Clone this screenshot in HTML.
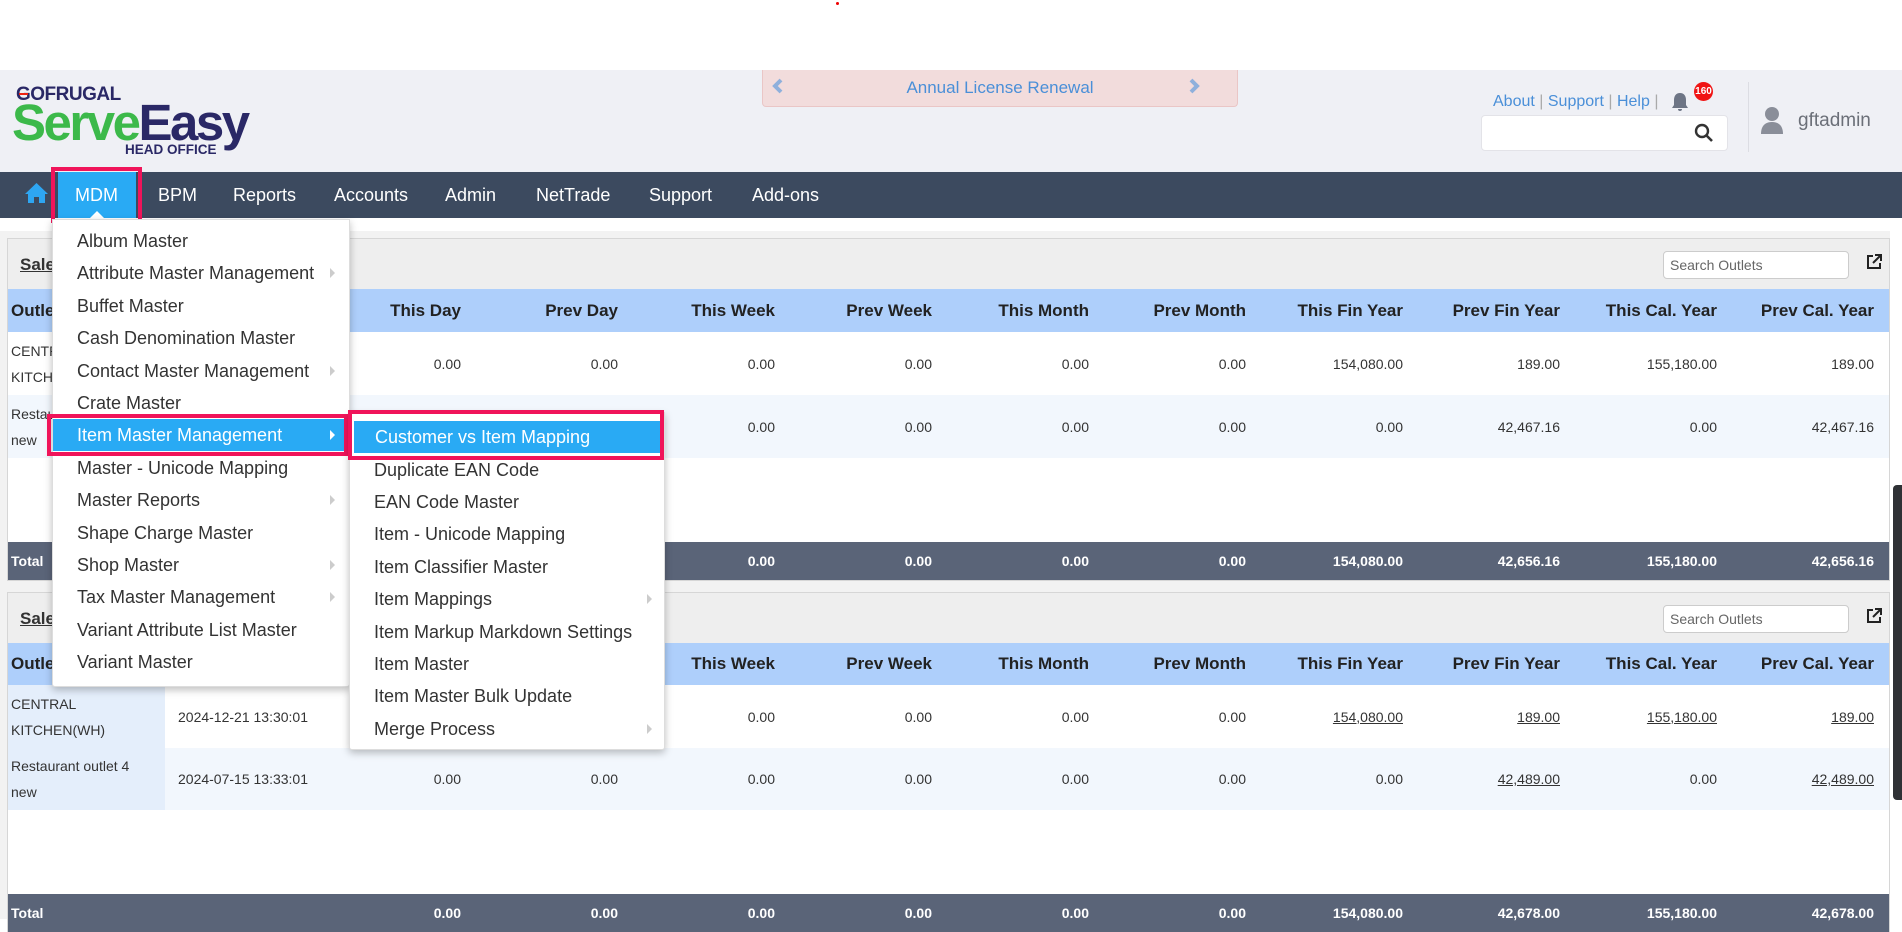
<!DOCTYPE html>
<html><head><meta charset="utf-8"><style>
*{margin:0;padding:0;box-sizing:border-box}
body{width:1902px;height:919px;overflow:hidden;background:#fff;font-family:"Liberation Sans",sans-serif;position:relative;color:#333}
.abs{position:absolute}
#hdr{left:0;top:70px;width:1902px;height:102px;background:#eff0f5}
#nav{left:0;top:172px;width:1902px;height:46px;background:#3c4a5f}
.nv{position:absolute;top:172px;height:46px;line-height:46px;color:#fff;font-size:18px}
.gray{left:0;top:231px;width:1890px;height:688px;background:#f2f2f2}
.panel{position:absolute;left:7px;width:1883px;background:#fff;border:1px solid #d6d6d6}
.ph{position:absolute;left:0;top:0;width:100%;height:50px;background:#eeeeee}
.row{position:absolute;left:0;width:100%;display:flex;font-size:14px;color:#333}
.row>div{flex:none;display:flex;align-items:center}
.c0{width:157px;padding-left:3px;line-height:26px}
.c1{width:139px;padding-left:13px;white-space:nowrap}
.cn{width:157px;justify-content:flex-end}
.hrow{background:#aecffb;font-weight:bold;font-size:17px;color:#222}
.trow{background:#5a6478;color:#fff;font-weight:bold;font-size:14px}
.u{text-decoration:underline}
.search{position:absolute;width:186px;height:28px;border:1px solid #ccc;border-radius:4px;background:#fff;font-size:14px;color:#666;padding-left:6px;line-height:26px}
.menu{position:absolute;background:#fff;box-shadow:0 3px 8px rgba(0,0,0,.25);border:1px solid #ddd;border-radius:0 0 3px 3px}
.mi{position:absolute;left:0;width:100%;height:32px;line-height:32px;font-size:18px;color:#333;padding-left:24px;white-space:nowrap}
.ar{position:absolute;width:0;height:0;border-top:5px solid transparent;border-bottom:5px solid transparent;border-left:5px solid #ccc;top:11px}
</style></head><body>
<div class="abs" style="left:836px;top:2px;width:3px;height:3px;background:#e00;border-radius:50%"></div>
<div id="hdr" class="abs"></div>
<!-- logo -->
<div class="abs" style="left:16px;top:84px;font-size:19px;font-weight:bold;color:#2a2866;letter-spacing:-0.5px">GOFRUGAL</div>
<div class="abs" style="left:19px;top:93px;width:9px;height:2px;background:#e21"></div>
<div class="abs" style="left:12px;top:95px;font-size:51px;font-weight:bold;letter-spacing:-2.5px;line-height:56px"><span style="color:#3cb94a">Serve</span><span style="color:#2a2866">Easy</span></div>
<div class="abs" style="left:125px;top:142px;font-size:13.5px;font-weight:bold;color:#2a2866">HEAD OFFICE</div>
<!-- banner -->
<div class="abs" style="left:762px;top:70px;width:476px;height:37px;background:#f2dcdc;border:1px solid #eac6c6;border-top:none;border-radius:0 0 4px 4px;text-align:center;line-height:36px;font-size:17px;color:#4a8fd8">Annual License Renewal</div>
<svg class="abs" style="left:771px;top:78px" width="14" height="16" viewBox="0 0 14 16"><path d="M10 2L4 8l6 6" fill="none" stroke="#8fb0dc" stroke-width="4"/></svg>
<svg class="abs" style="left:1187px;top:78px" width="14" height="16" viewBox="0 0 14 16"><path d="M4 2l6 6-6 6" fill="none" stroke="#8fb0dc" stroke-width="4"/></svg>
<!-- top right -->
<div class="abs" style="left:1493px;top:93px;font-size:16px;color:#4a8fd8;white-space:nowrap">About <span style="color:#aaa">|</span> Support <span style="color:#aaa">|</span> Help <span style="color:#aaa">|</span></div>
<svg class="abs" style="left:1670px;top:91px" width="20" height="22" viewBox="0 0 20 22"><path d="M10 2c-4 0-6 3-6 7v5l-2 3h16l-2-3V9c0-4-2-7-6-7z M8 18a2 2 0 0 0 4 0z" fill="#6d7585"/></svg>
<div class="abs" style="left:1694px;top:82px;width:19px;height:19px;border-radius:50%;background:#f01414;color:#fff;font-size:10px;font-weight:bold;text-align:center;line-height:19px">160</div>
<div class="abs" style="left:1481px;top:115px;width:247px;height:36px;background:#fff;border:1px solid #e3e3e8;border-radius:4px"></div>
<svg class="abs" style="left:1694px;top:123px" width="20" height="20" viewBox="0 0 20 20"><circle cx="8" cy="8" r="6" fill="none" stroke="#333" stroke-width="2.4"/><path d="M12.5 12.5L18 18" stroke="#333" stroke-width="2.6"/></svg>
<div class="abs" style="left:1748px;top:82px;width:1px;height:70px;background:#dcdde3"></div>
<svg class="abs" style="left:1760px;top:106px" width="24" height="30" viewBox="0 0 24 30"><circle cx="12" cy="8" r="7" fill="#8a8e99"/><path d="M1 28c0-8 4-12 11-12s11 4 11 12z" fill="#8a8e99"/></svg>
<div class="abs" style="left:1798px;top:110px;font-size:19px;color:#6b6f78">gftadmin</div>
<!-- nav -->
<div id="nav" class="abs"></div>
<svg class="abs" style="left:24px;top:182px" width="25" height="22" viewBox="0 0 25 22"><path d="M12.5 1L1 12h3v9h6v-6h5v6h6v-9h3z" fill="#2ea6f2"/></svg>
<div class="abs" style="left:58px;top:172px;width:78px;height:46px;background:#29aaf4"></div>
<div class="abs" style="left:51px;top:167px;width:91px;height:56px;border:4px solid #f0145a"></div>
<div class="abs" style="left:90px;top:211px;width:0;height:0;border-left:7px solid transparent;border-right:7px solid transparent;border-bottom:7px solid #fff"></div>
<div class="nv" style="left:75px">MDM</div>
<div class="nv" style="left:158px">BPM</div>
<div class="nv" style="left:233px">Reports</div>
<div class="nv" style="left:334px">Accounts</div>
<div class="nv" style="left:445px">Admin</div>
<div class="nv" style="left:536px">NetTrade</div>
<div class="nv" style="left:649px">Support</div>
<div class="nv" style="left:752px">Add-ons</div>
<!-- content -->
<div class="abs gray"></div>
<div class="abs" style="left:1893px;top:485px;width:9px;height:315px;background:#2f3135;border-radius:4px 0 0 4px"></div>

<div class="panel" style="top:238px;height:343px">
 <div class="ph"></div>
 <div class="abs" style="left:12px;top:16px;font-size:17px;font-weight:bold;text-decoration:underline">Sales</div>
 <div class="search" style="left:1655px;top:12px">Search Outlets</div>
 <svg class="abs" style="left:1858px;top:15px" width="16" height="16" viewBox="0 0 16 16"><path d="M7 2H2v12h12V9" fill="none" stroke="#222" stroke-width="2"/><path d="M9 1h6v6M15 1L7 9" fill="none" stroke="#222" stroke-width="2"/></svg>
 <div class="row hrow" style="top:50px;height:43px"><div class="c0">Outlet</div><div class="c1">Last Sync</div><div class="cn">This Day</div><div class="cn">Prev Day</div><div class="cn">This Week</div><div class="cn">Prev Week</div><div class="cn">This Month</div><div class="cn">Prev Month</div><div class="cn">This Fin Year</div><div class="cn">Prev Fin Year</div><div class="cn">This Cal. Year</div><div class="cn">Prev Cal. Year</div></div>
 <div class="row" style="top:93px;height:63px"><div class="c0">CENTRAL<br>KITCHEN(WH)</div><div class="c1"></div><div class="cn">0.00</div><div class="cn">0.00</div><div class="cn">0.00</div><div class="cn">0.00</div><div class="cn">0.00</div><div class="cn">0.00</div><div class="cn">154,080.00</div><div class="cn">189.00</div><div class="cn">155,180.00</div><div class="cn">189.00</div></div>
 <div class="row" style="top:156px;height:63px;background:#f2f7fd"><div class="c0">Restaurant outlet 4<br>new</div><div class="c1"></div><div class="cn">0.00</div><div class="cn">0.00</div><div class="cn">0.00</div><div class="cn">0.00</div><div class="cn">0.00</div><div class="cn">0.00</div><div class="cn">0.00</div><div class="cn">42,467.16</div><div class="cn">0.00</div><div class="cn">42,467.16</div></div>
 <div class="row trow" style="top:303px;height:38px"><div class="c0">Total</div><div class="c1"></div><div class="cn">0.00</div><div class="cn">0.00</div><div class="cn">0.00</div><div class="cn">0.00</div><div class="cn">0.00</div><div class="cn">0.00</div><div class="cn">154,080.00</div><div class="cn">42,656.16</div><div class="cn">155,180.00</div><div class="cn">42,656.16</div></div>
</div>

<div class="panel" style="top:592px;height:340px">
 <div class="ph"></div>
 <div class="abs" style="left:12px;top:16px;font-size:17px;font-weight:bold;text-decoration:underline">Sales</div>
 <div class="search" style="left:1655px;top:12px">Search Outlets</div>
 <svg class="abs" style="left:1858px;top:15px" width="16" height="16" viewBox="0 0 16 16"><path d="M7 2H2v12h12V9" fill="none" stroke="#222" stroke-width="2"/><path d="M9 1h6v6M15 1L7 9" fill="none" stroke="#222" stroke-width="2"/></svg>
 <div class="row hrow" style="top:50px;height:42px"><div class="c0">Outlet</div><div class="c1">Last Sync</div><div class="cn">This Day</div><div class="cn">Prev Day</div><div class="cn">This Week</div><div class="cn">Prev Week</div><div class="cn">This Month</div><div class="cn">Prev Month</div><div class="cn">This Fin Year</div><div class="cn">Prev Fin Year</div><div class="cn">This Cal. Year</div><div class="cn">Prev Cal. Year</div></div>
 <div class="row" style="top:92px;height:63px"><div class="c0" style="background:#e4eefb">CENTRAL<br>KITCHEN(WH)</div><div class="c1">2024-12-21 13:30:01</div><div class="cn">0.00</div><div class="cn">0.00</div><div class="cn">0.00</div><div class="cn">0.00</div><div class="cn">0.00</div><div class="cn">0.00</div><div class="cn u">154,080.00</div><div class="cn u">189.00</div><div class="cn u">155,180.00</div><div class="cn u">189.00</div></div>
 <div class="row" style="top:155px;height:62px;background:#f2f7fd"><div class="c0" style="background:#e4eefb">Restaurant outlet 4<br>new</div><div class="c1">2024-07-15 13:33:01</div><div class="cn">0.00</div><div class="cn">0.00</div><div class="cn">0.00</div><div class="cn">0.00</div><div class="cn">0.00</div><div class="cn">0.00</div><div class="cn">0.00</div><div class="cn u">42,489.00</div><div class="cn">0.00</div><div class="cn u">42,489.00</div></div>
 <div class="row trow" style="top:301px;height:38px"><div class="c0">Total</div><div class="c1"></div><div class="cn">0.00</div><div class="cn">0.00</div><div class="cn">0.00</div><div class="cn">0.00</div><div class="cn">0.00</div><div class="cn">0.00</div><div class="cn">154,080.00</div><div class="cn">42,678.00</div><div class="cn">155,180.00</div><div class="cn">42,678.00</div></div>
</div>

<!-- menu 1 -->
<div class="menu" style="left:52px;top:219px;width:298px;height:468px">
 <div class="mi" style="top:5px">Album Master</div>
 <div class="mi" style="top:37px">Attribute Master Management<span class="ar" style="left:277px"></span></div>
 <div class="mi" style="top:70px">Buffet Master</div>
 <div class="mi" style="top:102px">Cash Denomination Master</div>
 <div class="mi" style="top:135px">Contact Master Management<span class="ar" style="left:277px"></span></div>
 <div class="mi" style="top:167px">Crate Master</div>
 <div class="mi" style="top:199px;background:#29aaf4;color:#fff;width:291px">Item Master Management<span class="ar" style="left:277px;border-left-color:#fff"></span></div>
 <div class="mi" style="top:232px">Master - Unicode Mapping</div>
 <div class="mi" style="top:264px">Master Reports<span class="ar" style="left:277px"></span></div>
 <div class="mi" style="top:297px">Shape Charge Master</div>
 <div class="mi" style="top:329px">Shop Master<span class="ar" style="left:277px"></span></div>
 <div class="mi" style="top:361px">Tax Master Management<span class="ar" style="left:277px"></span></div>
 <div class="mi" style="top:394px">Variant Attribute List Master</div>
 <div class="mi" style="top:426px">Variant Master</div>
</div>
<div class="abs" style="left:47px;top:414px;width:301px;height:42px;border:4px solid #f0145a"></div>
<!-- menu 2 -->
<div class="menu" style="left:349px;top:412px;width:316px;height:338px">
 <div class="mi" style="top:8px;left:4px;width:306px;background:#29aaf4;color:#fff;padding-left:21px">Customer vs Item Mapping</div>
 <div class="mi" style="top:41px">Duplicate EAN Code</div>
 <div class="mi" style="top:73px">EAN Code Master</div>
 <div class="mi" style="top:105px">Item - Unicode Mapping</div>
 <div class="mi" style="top:138px">Item Classifier Master</div>
 <div class="mi" style="top:170px">Item Mappings<span class="ar" style="left:297px"></span></div>
 <div class="mi" style="top:203px">Item Markup Markdown Settings</div>
 <div class="mi" style="top:235px">Item Master</div>
 <div class="mi" style="top:267px">Item Master Bulk Update</div>
 <div class="mi" style="top:300px">Merge Process<span class="ar" style="left:297px"></span></div>
</div>
<div class="abs" style="left:348px;top:410px;width:316px;height:50px;border:4px solid #f0145a"></div>
</body></html>
